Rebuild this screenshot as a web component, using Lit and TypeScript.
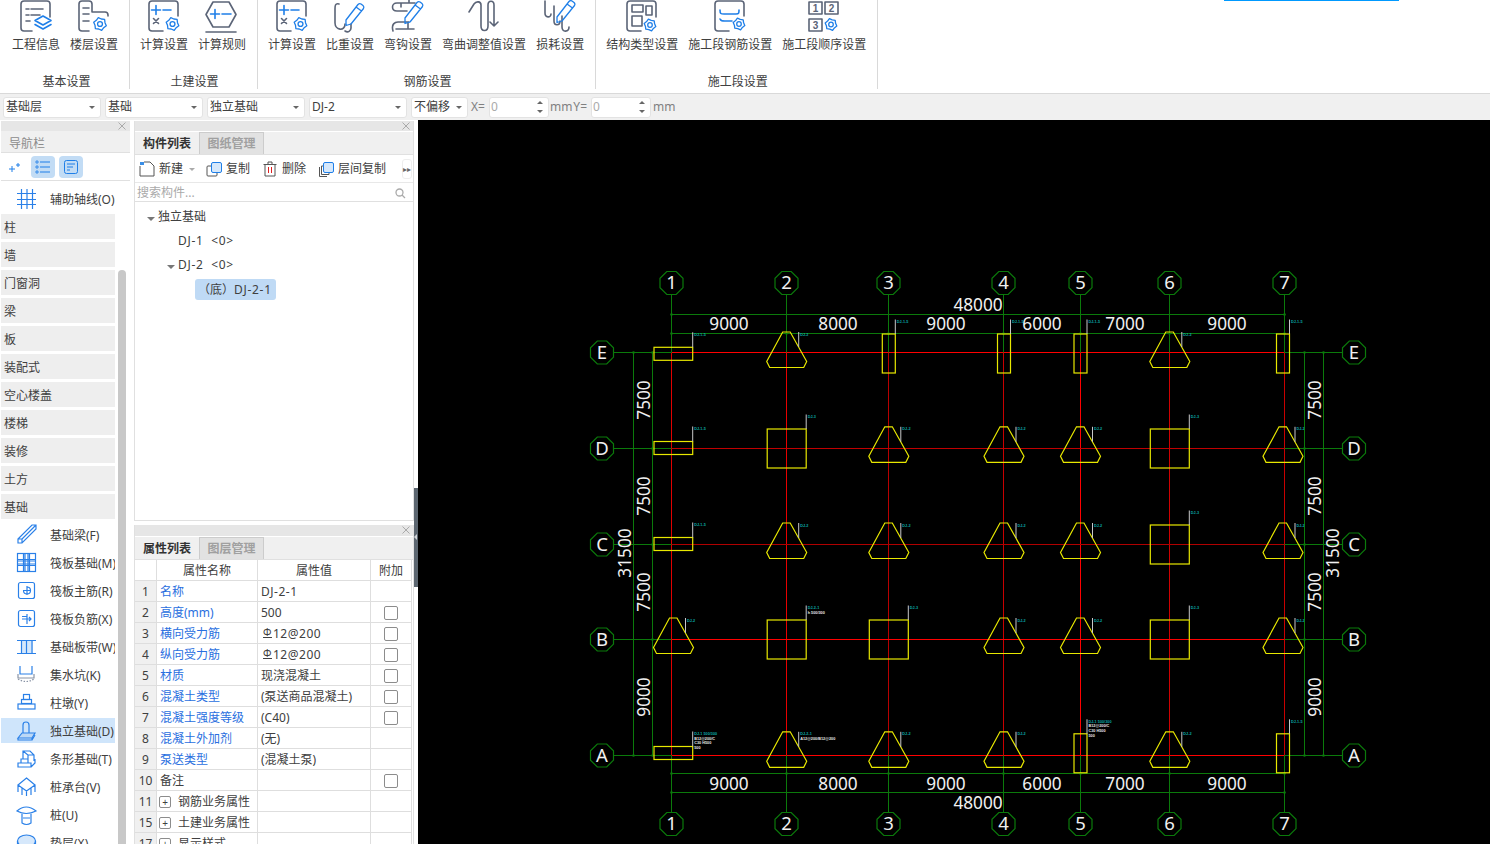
import { LitElement, html, css, svg } from "lit";
import { customElement } from "lit/decorators.js";

const gear = (cx: number, cy: number, r = 6) => {
  const pts: string[] = [];
  for (let i = 0; i < 12; i++) {
    const a = (Math.PI / 6) * i + Math.PI / 12;
    const rr = i % 2 === 0 ? r : r * 0.8;
    pts.push(`${(cx + rr * Math.cos(a)).toFixed(1)},${(cy + rr * Math.sin(a)).toFixed(1)}`);
  }
  return svg`<polygon class="b thin" points=${pts.join(" ")}></polygon><circle class="b thin" cx=${cx} cy=${cy} r=${r * 0.38}></circle>`;
};

const pen = (dx = 0, dy = 0) =>
  svg`<path class="b thin" transform="translate(${dx} ${dy})" d="M14 20 L26 4.500 q1.500 -1.500 3 -.5 l2 1.500 q1.500 1.500 .5 3 L19 24 l-5 1.500z M24 7 l5.500 4"></path>`;

const RIBBON_ICONS: Record<string, unknown> = {
  info: svg`<path class="g" d="M14 31H6a3 3 0 0 1-3-3V4a3 3 0 0 1 3-3h23a3 3 0 0 1 3 3v13"></path>
    <path class="g" d="M8 9h3M13 9h12M8 15h3M13 15h9M8 21h4"></path>
    <path class="b" d="M25 16l8 4.5-8 4.5-8-4.5zM17 24.5l8 4.5 8-4.5"></path>`,
  floor: svg`<path class="g" d="M13 31H6a3 3 0 0 1-3-3V4a3 3 0 0 1 3-3h7a3 3 0 0 1 3 3v8h13a3 3 0 0 1 3 3v1"></path>
    <path class="g" d="M7 8h6M7 14h6M7 21h6"></path>${gear(24, 24, 6.5)}`,
  calc: svg`<path class="g" d="M17 31H6a3 3 0 0 1-3-3V4a3 3 0 0 1 3-3h23a3 3 0 0 1 3 3v12"></path>
    <path class="b" d="M10 5.500v9M5.500 10h9M17 10h8"></path><path class="g" d="M7.500 18.500l5 5M12.500 18.500l-5 5"></path>${gear(26.500, 24, 6.500)}`,
  rule: svg`<path class="g" d="M9 2H25L32 14.500 25 27H9L2 14.500z"></path><path class="g" d="M2 32H32"></path>
    <path class="b" d="M11 9.500v9M6.500 14h9M18 14h9"></path>`,
  weight: svg`<path class="g" d="M7 4C3 3 3 6 3 9V23C3 30 13 32 13 24M13 31C16 33 19 31 19 28V24"></path>${pen()}`,
  hook: svg`<path class="g" d="M25 3H7C1 3 1 11 7 11H17M11 7V3M19 3V0M3 31C1 24 5 22 8 22H19M18 22V28M6 29H24"></path>${pen(1, -2)}`,
  bend: svg`<path class="g" d="M3 12L8 4C10 1 15 1 15 5V26C15 32 22 32 22 26V5C22 0 28 0 28 5V26L32 22M28 26L24 22"></path>`,
  loss: svg`<path class="g" d="M3 1V13C3 18 9 18 9 14M12 6V21C12 26 18 26 18 21M20 16V27C20 33 27 32 27 27"></path>${pen(1, -3)}`,
  type: svg`<path class="g" d="M17 31H6a3 3 0 0 1-3-3V4a3 3 0 0 1 3-3h23a3 3 0 0 1 3 3v13"></path>
    <rect class="g" x="8" y="5" width="11" height="7"></rect><rect class="g" x="22" y="6" width="6" height="9"></rect><rect class="g" x="8" y="16" width="10" height="10"></rect>${gear(26, 25, 6)}`,
  rebar: svg`<path class="g" d="M17 31H6a3 3 0 0 1-3-3V4a3 3 0 0 1 3-3h23a3 3 0 0 1 3 3v12"></path>
    <path class="b" d="M8 10C8 14 9 14 12 14H24C27 14 27 13 27 10M8 19C9 21 10 21 13 21H20"></path>${gear(27, 24, 6)}`,
  order: svg`<rect class="g" x="3" y="2" width="13" height="12"></rect><rect class="g" x="19" y="2" width="13" height="12"></rect><rect class="g" x="3" y="19" width="13" height="12"></rect>
    <text class="num" x="9.500" y="12">1</text><text class="num" x="25.500" y="12">2</text><text class="num" x="9.500" y="29">3</text>${gear(25, 24.500, 6)}`,
};

const RIBBON = [
  { title: "基本设置", items: [["工程信息", "info"], ["楼层设置", "floor"]] },
  { title: "土建设置", items: [["计算设置", "calc"], ["计算规则", "rule"]] },
  {
    title: "钢筋设置",
    items: [["计算设置", "calc"], ["比重设置", "weight"], ["弯钩设置", "hook"], ["弯曲调整值设置", "bend"], ["损耗设置", "loss"]],
  },
  { title: "施工段设置", items: [["结构类型设置", "type"], ["施工段钢筋设置", "rebar"], ["施工段顺序设置", "order"]] },
];

const NAV_ICONS: Record<string, unknown> = {
  axis: svg`<path d="M3 6.500H22M3 12.500H22M3 17.500H22M7.500 2V22M13 2V22M18.500 2V22"></path>`,
  beam: svg`<path d="M4 16L18 2H22V6L8 20H4ZM4 16H8V20M8 16L22 2"></path>`,
  raft: svg`<rect x="3.500" y="2.500" width="18" height="18"></rect><path d="M3.500 8.500H21.500M3.500 14.500H21.500M9.500 2.500V20.500M15.500 2.500V20.500M3.500 10H21.500M3.500 13H21.500M11 2.500V20.500M14 2.500V20.500"></path>`,
  main: svg`<rect x="4.500" y="3.500" width="16" height="16" rx="2"></rect><path d="M9 11.500H17M13 7V16M13 8A3.500 3.500 0 1 1 9.500 11.500"></path>`,
  neg: svg`<rect x="4.500" y="3.500" width="16" height="16" rx="2"></rect><path d="M8 9.500H13V14.500M8 12H17M13 7V17M15 10L17 12L15 14"></path>`,
  strip: svg`<rect x="7" y="5.500" width="12" height="13" fill="#d6e8fb" stroke="none"></rect><path d="M3 5.500H22M3 18.500H22M7.500 5.500V18.500M18 5.500V18.500M12.500 5.500V18.500" ></path>`,
  pit: svg`<path d="M6 3V11H18V3"></path><path d="M4 11V15H20V11" stroke="#8a94a6"></path><path d="M4 16Q12 21 20 16" stroke="#8a94a6" stroke-dasharray="1.500 1.500"></path>`,
  pier: svg`<rect x="9.500" y="3.500" width="6" height="5"></rect><rect x="7.500" y="8.500" width="10" height="4"></rect><rect x="4" y="13" width="17" height="5"></rect>`,
  iso: svg`<path fill="#bcd8f6" d="M4 19L8 14H21L18 19Z"></path><path d="M9 14V6Q9 3 12 3Q15 3 15 6V14M4 19V21H18V19M18 21L21 16"></path>`,
  bar: svg`<path d="M4 20H17V16H4ZM7 16V12H14V16M9 12V4H16L20 8V14M14 8H20M9 4L14 8V12M17 20L21 16V12"></path>`,
  cap: svg`<path d="M12.500 3L21 10L12.500 16L4 10ZM4 10V17M21 10V17M12.500 16V21M8 13V20M17 13V20"></path>`,
  pile: svg`<path d="M3 8Q12 0 22 8Q12 13 3 8ZM8 11V20Q12.500 23 17 20V11M9 15H16"></path>`,
  pad: svg`<ellipse cx="12.500" cy="10" rx="9" ry="6" fill="#d6e8fb"></ellipse><path d="M3.500 10V18M21.500 10V18"></path>`,
};

const BANDS = ["柱", "墙", "门窗洞", "梁", "板", "装配式", "空心楼盖", "楼梯", "装修", "土方", "基础"];
const FOUNDATION = [
  ["基础梁(F)", "beam"],
  ["筏板基础(M)", "raft"],
  ["筏板主筋(R)", "main"],
  ["筏板负筋(X)", "neg"],
  ["基础板带(W)", "strip"],
  ["集水坑(K)", "pit"],
  ["柱墩(Y)", "pier"],
  ["独立基础(D)", "iso"],
  ["条形基础(T)", "bar"],
  ["桩承台(V)", "cap"],
  ["桩(U)", "pile"],
  ["垫层(X)", "pad"],
];

type Prop = { n: string; name: string; value?: string; link?: boolean; check?: boolean; expand?: boolean; steel?: boolean; wide?: boolean };
const PROPS: Prop[] = [
  { n: "1", name: "名称", value: "DJ-2-1", link: true, wide: true },
  { n: "2", name: "高度(mm)", value: "500", link: true, check: true },
  { n: "3", name: "横向受力筋", value: "12@200", link: true, check: true, steel: true, wide: true },
  { n: "4", name: "纵向受力筋", value: "12@200", link: true, check: true, steel: true, wide: true },
  { n: "5", name: "材质", value: "现浇混凝土", link: true, check: true },
  { n: "6", name: "混凝土类型", value: "(泵送商品混凝土)", link: true, check: true },
  { n: "7", name: "混凝土强度等级", value: "(C40)", link: true, check: true },
  { n: "8", name: "混凝土外加剂", value: "(无)", link: true },
  { n: "9", name: "泵送类型", value: "(混凝土泵)", link: true },
  { n: "10", name: "备注", check: true },
  { n: "11", name: "钢筋业务属性", expand: true },
  { n: "15", name: "土建业务属性", expand: true },
  { n: "17", name: "显示样式", expand: true },
];

// drawing data, page coordinates
const COLS = [671.5, 786.5, 888.5, 1003.5, 1080.5, 1169.5, 1284.5];
const COL_RED = ["#e00000", "#e80000", "#b80000", "#c80000", "#ff0000", "#d00000", "#c80000"];
const FOOT_X = [673.5, 786.7, 888.8, 1004, 1080.5, 1169.8, 1283];
const ROWS = [
  { name: "E", y: 352.5, red: "#ff0000", trap: -20.5, hr: -5.2, vr: -18.5, plan: "htvvvtv" },
  { name: "D", y: 448.5, red: "#c00000", trap: -21.7, hr: -7, vr: -18.5, plan: "hstttst" },
  { name: "C", y: 544.5, red: "#b00000", trap: -21.5, hr: -7, vr: -18.5, plan: "httttst" },
  { name: "B", y: 639.5, red: "#ff0000", trap: -21.5, hr: -7, vr: -18.5, plan: "tssttst" },
  { name: "A", y: 755.5, red: "#ff0000", trap: -23.7, hr: -9, vr: -21.7, plan: "htttvtv" },
];
const SPANS = [
  ["9000", 729],
  ["8000", 838],
  ["9000", 946],
  ["6000", 1042],
  ["7000", 1125],
  ["9000", 1227],
] as const;
const VSPANS = [
  ["7500", 400],
  ["7500", 496],
  ["7500", 592],
  ["9000", 697],
] as const;
const GREEN = "#0b7a0b";

// extra lines written beside some footings
const NOTES: Record<string, string[]> = {
  B1: ["DJ-2-1", "h 500/300"],
  A0: ["DJ-1 500/300", "B12@200/C", "C30 H500", "500"],
  A1: ["DJ-2-1", "A12@200/B12@200"],
  A4: ["DJ-1 500/300", "B12@200/C", "C30 H500", "500"],
};

const mark = (x1: number, y1: number, x2: number, y2: number, tag: string, lines: string[]) => {
  const rows = lines.length ? lines : [tag];
  return svg`<line x1=${x1} y1=${y1} x2=${x2} y2=${y2} stroke="#c8c8c8"></line>
    ${rows.map(
      (t, i) =>
        svg`<text class="tag" x=${x2 + 1.5} y=${y2 + 3.5 + i * 4.6} fill=${i === 0 ? "#0aa8a8" : "#e8e8e8"}>${t}</text>`,
    )}`;
};

const footing = (kind: string, cx: number, row: (typeof ROWS)[number], key: string, tag: string) => {
  const lines = NOTES[key] ?? [];
  if (kind === "t") {
    const t = row.y + row.trap;
    const pts = [
      [cx - 4, t],
      [cx + 3.5, t],
      [cx + 20, t + 29.5],
      [cx + 17, t + 35.5],
      [cx - 17, t + 35.5],
      [cx - 20, t + 29.5],
    ];
    return svg`<polygon class="foot" points=${pts.map((p) => p.join(",")).join(" ")}></polygon>
      ${mark(cx + 12, t + 15, cx + 12, t, tag, lines)}`;
  }
  if (kind === "s") {
    return svg`<rect class="foot" x=${cx - 19.5} y=${row.y - 19.5} width="39" height="39"></rect>
      ${mark(cx + 19.5, row.y - 19.5, cx + 19.5, row.y - 34, tag, lines)}`;
  }
  if (kind === "h") {
    const t = row.y + row.hr;
    return svg`<rect class="foot" x="654" y=${t} width="38.700" height="13"></rect>
      ${mark(692.7, t, 692.7, t - 15, tag, lines)}`;
  }
  const t = row.y + row.vr;
  return svg`<rect class="foot" x=${cx - 6.5} y=${t} width="13" height="39"></rect>
    ${mark(cx + 6.5, t, cx + 6.5, t - 14.5, tag, lines)}`;
};

const bubble = (cx: number, cy: number, label: string) => {
  const pts: string[] = [];
  for (let i = 0; i < 8; i++) {
    const a = (Math.PI / 4) * i + Math.PI / 8;
    pts.push(`${(cx + 12.4 * Math.cos(a)).toFixed(1)},${(cy + 12.4 * Math.sin(a)).toFixed(1)}`);
  }
  return svg`<polygon points=${pts.join(" ")} fill="#000" stroke=${GREEN} stroke-width="1.200"></polygon>
    <text class="dim" x=${cx} y=${cy + 6.300} font-size="17">${label}</text>`;
};

const dimText = (t: string, x: number, y: number, rotate = false) => {
  const w = t.length * 9.85;
  if (rotate) {
    return svg`<text class="dim" transform="translate(${x + 6.800} ${y}) rotate(-90)" textLength=${w} lengthAdjust="spacingAndGlyphs">${t}</text>`;
  }
  return svg`<text class="dim" x=${x} y=${y + 6.800} textLength=${w} lengthAdjust="spacingAndGlyphs">${t}</text>`;
};

const dot = (x: number, y: number) => svg`<circle cx=${x} cy=${y} r="1.300" fill=${GREEN}></circle>`;

@customElement("cad-drawing")
export class CadDrawing extends LitElement {
  static styles = css`
    :host {
      display: block;
      background: #000;
      overflow: hidden;
    }
    svg {
      display: block;
    }
    .foot {
      fill: none;
      stroke: #e8e800;
      stroke-width: 1.2;
    }
    .dim {
      fill: #f0f0f0;
      font-family: "Noto Sans", "Liberation Sans", sans-serif;
      font-size: 18.5px;
      text-anchor: middle;
    }
    .tag {
      font-family: "Liberation Sans", sans-serif;
      font-size: 3.8px;
      font-weight: 700;
    }
  `;

  protected render() {
    const top = ROWS[0].y;
    const bottom = ROWS[4].y;
    const left = COLS[0];
    const right = COLS[6];
    const green = (x1: number, y1: number, x2: number, y2: number) =>
      svg`<line x1=${x1} y1=${y1} x2=${x2} y2=${y2} stroke=${GREEN}></line>`;
    return html`<svg width="1072" height="724" viewBox="418 120 1072 724">
      ${COLS.map((x, i) => svg`<line x1=${x} y1=${top} x2=${x} y2=${bottom} stroke=${COL_RED[i]}></line>`)}
      ${ROWS.map((r) => svg`<line x1=${left} y1=${r.y} x2=${right} y2=${r.y} stroke=${r.red}></line>`)}
      ${COLS.map((x) => green(x, 295, x, top))} ${COLS.map((x) => green(x, bottom, x, 812))}
      ${ROWS.map((r) => green(614, r.y, left, r.y))} ${ROWS.map((r) => green(right, r.y, 1342, r.y))}
      ${[314.5, 333.5, 773.5, 792.5].map((y) => green(left, y, right, y))}
      ${[633.5, 652.5, 1304.5, 1323.5].map((x) => green(x, top, x, bottom))}
      ${COLS.map((x) => [dot(x, 333.5), dot(x, 773.5)])} ${[left, right].map((x) => [dot(x, 314.5), dot(x, 792.5)])}
      ${ROWS.map((r) => [dot(652.5, r.y), dot(1304.5, r.y)])}
      ${[top, bottom].map((y) => [dot(633.5, y), dot(1323.5, y)])}
      ${ROWS.map((r) =>
        [...r.plan].map((kind, c) =>
          footing(kind, FOOT_X[c], r, `${r.name}${c}`, kind === "s" ? "DJ-3" : kind === "t" ? "DJ-2" : "DJ-1-5"),
        ),
      )}
      ${SPANS.map(([t, x]) => dimText(t, x, 323.5))} ${SPANS.map(([t, x]) => dimText(t, x, 783))}
      ${dimText("48000", 978, 304)} ${dimText("48000", 978, 802)}
      ${VSPANS.map(([t, y]) => dimText(t, 643, y, true))} ${VSPANS.map(([t, y]) => dimText(t, 1314, y, true))}
      ${dimText("31500", 624, 553, true)} ${dimText("31500", 1332, 553, true)}
      ${COLS.map((x, i) => [bubble(x, 283, String(i + 1)), bubble(x, 824, String(i + 1))])}
      ${ROWS.map((r) => [bubble(602, r.y, r.name), bubble(1354, r.y, r.name)])}
    </svg>`;
  }
}

@customElement("app-root")
export class AppRoot extends LitElement {
  static styles = css`
    :host {
      display: block;
      width: 1490px;
      height: 844px;
      overflow: hidden;
      position: relative;
      background: #fff;
      color: #404040;
      font: 12px/18px "Noto Sans", "Noto Sans CJK SC", sans-serif;
    }
    svg .g,
    svg .b {
      fill: none;
      stroke-width: 1.6;
      stroke-linecap: round;
      stroke-linejoin: round;
    }
    svg .g {
      stroke: #5b6477;
    }
    svg .b {
      stroke: #1f7fe8;
    }
    svg .thin {
      stroke-width: 1.3;
    }
    svg .num {
      fill: #5b6477;
      font: 700 10px "Liberation Sans", sans-serif;
      text-anchor: middle;
    }
    .progress {
      position: absolute;
      left: 1224px;
      top: 0;
      width: 175px;
      height: 1px;
      background: #0099ff;
    }
    .ribbon {
      display: flex;
      height: 93px;
      box-sizing: border-box;
    }
    .group {
      height: 89px;
      display: flex;
      flex-direction: column;
      justify-content: space-between;
      padding: 0 11px 0 10px;
      border-right: 1px solid #d9d9d9;
    }
    .group:first-child {
      padding-left: 12px;
    }
    .group-items {
      display: flex;
      gap: 10px;
    }
    .item {
      display: flex;
      flex-direction: column;
      align-items: center;
      white-space: nowrap;
    }
    .item svg {
      display: block;
      width: 36px;
      height: 35px;
      margin-bottom: 1px;
    }
    .group-title {
      text-align: center;
      line-height: 18px;
      padding-left: 3px;
      height: 16px;
    }
    .bar {
      height: 27px;
      box-sizing: border-box;
      border-top: 1px solid #d9d9d9;
      background: #f0f0f0;
      display: flex;
      align-items: center;
      padding-left: 3px;
      gap: 4px;
      color: #808080;
    }
    .select,
    .input {
      height: 21px;
      box-sizing: border-box;
      background: #fff;
      border: 1px solid #e3e3e3;
      border-radius: 3px;
      display: flex;
      align-items: center;
      padding-left: 2px;
      position: relative;
    }
    .select {
      width: 98px;
      color: #404040;
    }
    .select.short {
      width: 57px;
      margin-right: -1px;
    }
    .select::after {
      content: "";
      position: absolute;
      right: 5px;
      top: 8px;
      border: 3px solid transparent;
      border-top: 3px solid #666;
    }
    .input {
      width: 60px;
      color: #aaa;
      padding-left: 1px;
    }
    .input.after-y {
      margin-right: 1px;
    }
    .spin {
      position: absolute;
      right: 5px;
      top: 3px;
      display: flex;
      flex-direction: column;
      gap: 6px;
    }
    .spin i {
      display: block;
      border-left: 3px solid transparent;
      border-right: 3px solid transparent;
    }
    .spin i:first-child {
      border-bottom: 3px solid #666;
    }
    .spin i:last-child {
      border-top: 3px solid #666;
    }
    .bar .unit {
      margin-left: -3px;
    }
    .main {
      display: flex;
      height: 724px;
    }
    .nav {
      width: 130px;
      padding: 1px 0 0 1px;
      box-sizing: border-box;
      display: flex;
      flex-direction: column;
    }
    .close {
      height: 10px;
      background: #e6e6e6;
      position: relative;
      flex: none;
    }
    .close svg {
      position: absolute;
      right: 3px;
      top: 1px;
    }
    .nav .close svg {
      right: 4px;
    }
    .nav-title {
      height: 22px;
      flex: none;
      background: #f0f0f0;
      border-bottom: 1px solid #e0e0e0;
      color: #8c8c8c;
      padding-left: 8px;
      line-height: 25px;
      box-sizing: border-box;
    }
    .nav-tools {
      height: 28px;
      flex: none;
      box-sizing: border-box;
      border-bottom: 1px solid #e0e0e0;
      display: flex;
      align-items: center;
      gap: 4px;
      padding: 1px 0 0 2px;
    }
    .nav-tools button {
      all: unset;
      width: 24px;
      height: 22px;
      border-radius: 4px;
      display: flex;
      align-items: center;
      justify-content: center;
    }
    .nav-tools button.on {
      background: #c2dcf5;
    }
    .nav-body {
      flex: 1;
      min-height: 0;
      display: flex;
      padding-top: 5px;
      overflow: hidden;
    }
    .nav-list {
      width: 114px;
      flex: none;
      display: flex;
      flex-direction: column;
      gap: 3px;
    }
    .band,
    .tool {
      height: 25px;
      flex: none;
      display: flex;
      align-items: center;
      white-space: nowrap;
      overflow: hidden;
      box-sizing: border-box;
      padding-top: 2px;
    }
    .band {
      background: #eeeeee;
      padding-left: 3px;
    }
    .tool {
      padding-left: 13px;
      gap: 12px;
    }
    .tool.sel {
      background: #cfe5fb;
    }
    .tool svg {
      flex: none;
      margin-top: -2px;
      fill: none;
      stroke: #2a80e8;
      stroke-width: 1.200;
    }
    .scroll {
      width: 8px;
      margin: 84px 0 0 3px;
      background: #c8c8c8;
      border-radius: 4px 4px 0 0;
      height: 600px;
      flex: none;
    }
    .side {
      width: 280px;
      margin-left: 4px;
      display: flex;
      flex-direction: column;
      gap: 4px;
      padding-top: 1px;
      box-sizing: border-box;
    }
    .pane {
      border-left: 1px solid #e0e0e0;
      border-right: 1px solid #e0e0e0;
      box-sizing: border-box;
      display: flex;
      flex-direction: column;
    }
    .pane.top {
      height: 400px;
      border-bottom: 1px solid #e0e0e0;
    }
    .pane.bottom {
      flex: 1;
      min-height: 0;
      overflow: hidden;
    }
    .pane.bottom .close {
      height: 11px;
    }
    .tabs {
      display: flex;
      height: 23px;
      flex: none;
      background: #f0f0f0;
      border-bottom: 1px solid #e0e0e0;
      box-sizing: border-box;
      margin-top: 1px;
    }
    .tab {
      width: 64px;
      box-sizing: border-box;
      text-align: center;
      line-height: 24px;
      font-weight: 700;
      color: #333;
    }
    .tab.off {
      width: 65px;
      background: #e2e2e2;
      color: #a0a0a0;
      border: 1px solid #cccccc;
      border-bottom: none;
      line-height: 22px;
    }
    .comp-tools {
      height: 28px;
      flex: none;
      box-sizing: border-box;
      border-bottom: 1px solid #e8e8e8;
      display: flex;
      align-items: center;
      padding: 1px 0 0 4px;
      gap: 4px;
      white-space: nowrap;
    }
    .comp-tools svg {
      flex: none;
      margin-left: 8px;
    }
    .comp-tools svg:first-child {
      margin-left: 0;
    }
    .caret {
      border: 3px solid transparent;
      border-top: 3px solid #aaa;
      margin: 3px -1px 0 2px;
    }
    .more {
      margin-left: auto;
      margin-right: 1px;
      width: 10px;
      height: 20px;
      box-sizing: border-box;
      border: 1px solid #eee;
      border-radius: 3px;
      color: #666;
      font-size: 8px;
      line-height: 18px;
      text-align: center;
    }
    .search {
      height: 19px;
      flex: none;
      box-sizing: border-box;
      border-bottom: 1px solid #e0e0e0;
      color: #aaaaaa;
      padding: 2px 7px 0 2px;
      display: flex;
      justify-content: space-between;
      align-items: center;
    }
    .tree {
      padding-top: 3px;
      flex: 1;
    }
    .node {
      height: 24px;
      display: flex;
      align-items: center;
    }
    .code {
      letter-spacing: 0.7px;
    }
    .arrow {
      border: 4px solid transparent;
      border-top: 4px solid #777;
      margin: 4px 3px 0 0;
      border-bottom-width: 0;
    }
    .d0 {
      padding-left: 12px;
    }
    .d1 {
      padding-left: 43px;
    }
    .d1.open {
      padding-left: 32px;
    }
    .d2 {
      padding-left: 60px;
    }
    .picked {
      background: #bfdaf5;
      border-radius: 3px;
      height: 21px;
      width: 81px;
      box-sizing: border-box;
      padding-left: 3px;
      line-height: 21px;
    }
    .grid {
      display: grid;
      grid-template-columns: 22px 101px 113px 41px;
      grid-auto-rows: 21px;
    }
    .cell {
      border-right: 1px solid #dedede;
      border-bottom: 1px solid #dedede;
      box-sizing: border-box;
      white-space: nowrap;
      overflow: hidden;
      display: flex;
      align-items: center;
      padding: 1px 0 0 3px;
      line-height: 20px;
    }
    .cell.head {
      justify-content: center;
      padding-left: 0;
    }
    .cell.no {
      background: #f0f0f0;
      justify-content: center;
      padding-left: 0;
    }
    .cell.link {
      color: #2a6fe0;
    }
    .cell.mid {
      justify-content: center;
      padding-left: 0;
    }
    .cell.wide {
      letter-spacing: 0.5px;
    }
    .steel {
      display: inline-block;
      width: 11px;
      text-align: center;
      font-size: 10px;
      text-decoration: underline;
      margin: -3px 0 0 1px;
    }
    .check {
      width: 14px;
      height: 14px;
      box-sizing: border-box;
      border: 1px solid #8c8c8c;
      border-radius: 2px;
    }
    .plus {
      width: 12px;
      height: 12px;
      box-sizing: border-box;
      border: 1px solid #8c8c8c;
      border-radius: 2px;
      margin: 0 7px 0 -1px;
      display: flex;
      align-items: center;
      justify-content: center;
      font-size: 10px;
      line-height: 10px;
      font-style: normal;
    }
    .splitter {
      width: 4px;
      flex: none;
      position: relative;
    }
    .splitter i {
      position: absolute;
      left: 0;
      top: 368px;
      width: 4px;
      height: 99px;
      background: #5c6670;
    }
    .splitter i::after {
      content: "";
      position: absolute;
      left: 0;
      top: 46px;
      border: 3px solid transparent;
      border-left-width: 0;
      border-right: 3px solid #d0d4d8;
    }
    cad-drawing {
      flex: 1;
    }
  `;

  private closeIcon() {
    return html`<svg width="8" height="8" viewBox="0 0 8 8"><path d="M.5 .5L7.500 7.500M7.500 .5L.5 7.500" stroke="#aaa" fill="none"></path></svg>`;
  }

  private ribbon() {
    return html`<div class="ribbon">
      ${RIBBON.map(
        (g) => html`<div class="group">
          <div class="group-items">
            ${g.items.map(
              ([label, icon]) => html`<div class="item">
                <svg viewBox="0 0 36 35">${RIBBON_ICONS[icon]}</svg><span>${label}</span>
              </div>`,
            )}
          </div>
          <div class="group-title">${g.title}</div>
        </div>`,
      )}
    </div>`;
  }

  private toolbar() {
    return html`<div class="bar">
      ${["基础层", "基础", "独立基础", "DJ-2"].map((s) => html`<div class="select">${s}</div>`)}
      <div class="select short">不偏移</div>
      <span>X=</span>
      <div class="input">0<span class="spin"><i></i><i></i></span></div>
      <span class="unit">mm</span>
      <span class="unit">Y=</span>
      <div class="input after-y">0<span class="spin"><i></i><i></i></span></div>
      <span class="unit">mm</span>
    </div>`;
  }

  private nav() {
    return html`<div class="nav">
      <div class="close">${this.closeIcon()}</div>
      <div class="nav-title">导航栏</div>
      <div class="nav-tools">
        <button>
          <svg width="14" height="14" viewBox="0 0 14 14"><path d="M4 6v6M1 9h6M10 3v4M8 5h4" stroke="#1f7fe8" fill="none"></path></svg>
        </button>
        <button class="on">
          <svg width="16" height="14" viewBox="0 0 16 14"><path d="M5 2h10M5 7h10M5 12h10" stroke="#1f7fe8" fill="none"></path><path d="M1 1h2v2H1zM1 6h2v2H1zM1 11h2v2H1z" stroke="#1f7fe8" fill="none" stroke-width=".8"></path></svg>
        </button>
        <button class="on">
          <svg width="16" height="16" viewBox="0 0 16 16"><rect x="1.500" y="1.500" width="13" height="13" rx="2" fill="none" stroke="#1f7fe8"></rect><path d="M4 5h8M4 8h6M4 11h3" stroke="#1f7fe8" fill="none"></path></svg>
        </button>
      </div>
      <div class="nav-body">
        <div class="nav-list">
          <div class="tool"><svg width="24" height="24" viewBox="0 0 24 24">${NAV_ICONS.axis}</svg>辅助轴线(O)</div>
          ${BANDS.map((b) => html`<div class="band">${b}</div>`)}
          ${FOUNDATION.map(
            ([label, icon]) => html`<div class="tool ${icon === "iso" ? "sel" : ""}">
              <svg width="24" height="24" viewBox="0 0 24 24">${NAV_ICONS[icon]}</svg>${label}
            </div>`,
          )}
        </div>
        <div class="scroll"></div>
      </div>
    </div>`;
  }

  private compPane() {
    return html`<div class="pane top">
      <div class="close">${this.closeIcon()}</div>
      <div class="tabs"><div class="tab">构件列表</div><div class="tab off">图纸管理</div></div>
      <div class="comp-tools">
        <svg width="16" height="16" viewBox="0 0 16 16"><path d="M1 5V15H15V5L11 1H5" fill="none" stroke="#555"></path><path d="M1 1h4v3H1z" fill="#3a8ee6"></path></svg>
        <span>新建</span><i class="caret"></i>
        <svg width="16" height="16" viewBox="0 0 16 16"><rect x="5.500" y="1.500" width="10" height="10" rx="1.500" fill="#d6e8fb" stroke="#1f7fe8"></rect><path d="M5 5H2a1 1 0 0 0-1 1v8a1 1 0 0 0 1 1h8a1 1 0 0 0 1-1v-2" fill="none" stroke="#555"></path></svg>
        <span>复制</span>
        <svg width="16" height="16" viewBox="0 0 16 16"><path d="M3 4V15H13V4M1.500 3.500H14.500M6 3V1H10V3" fill="none" stroke="#555"></path><path d="M6.500 6V12M9.500 6V12" stroke="#e02020" fill="none"></path></svg>
        <span>删除</span>
        <svg width="16" height="16" viewBox="0 0 16 16"><rect x="5.500" y="1.500" width="10" height="10" rx="1.500" fill="#d6e8fb" stroke="#1f7fe8"></rect><path d="M5 5H3.500V13.500H11V12M1.500 6V15.500H9" fill="none" stroke="#555"></path></svg>
        <span>层间复制</span>
        <div class="more">▸▸</div>
      </div>
      <div class="search">
        <span>搜索构件...</span>
        <svg width="11" height="11" viewBox="0 0 11 11"><circle cx="4.500" cy="4.500" r="3.500" fill="none" stroke="#aaa" stroke-width="1.300"></circle><path d="M7 7L10 10" stroke="#aaa" stroke-width="1.300"></path></svg>
      </div>
      <div class="tree">
        <div class="node d0"><i class="arrow"></i>独立基础</div>
        <div class="node d1 code">DJ-1&nbsp;&nbsp;&lt;0&gt;</div>
        <div class="node d1 open code"><i class="arrow"></i>DJ-2&nbsp;&nbsp;&lt;0&gt;</div>
        <div class="node d2"><div class="picked">（底）<span class="code">DJ-2-1</span></div></div>
      </div>
    </div>`;
  }

  private propPane() {
    return html`<div class="pane bottom">
      <div class="close">${this.closeIcon()}</div>
      <div class="tabs"><div class="tab">属性列表</div><div class="tab off">图层管理</div></div>
      <div class="grid">
        <div class="cell head"></div>
        <div class="cell head">属性名称</div>
        <div class="cell head">属性值</div>
        <div class="cell head">附加</div>
        ${PROPS.map(
          (p) => html`<div class="cell no">${p.n}</div>
            <div class="cell ${p.link ? "link" : ""}">
              ${p.expand ? html`<i class="plus">+</i>` : ""}${p.name}
            </div>
            <div class="cell ${p.wide ? "wide" : ""}">${p.steel ? html`<span class="steel">Φ</span>` : ""}${p.value ?? ""}</div>
            <div class="cell mid">${p.check ? html`<i class="check"></i>` : ""}</div>`,
        )}
      </div>
    </div>`;
  }

  protected render() {
    return html`<div class="progress"></div>
      ${this.ribbon()} ${this.toolbar()}
      <div class="main">
        ${this.nav()}
        <div class="side">${this.compPane()} ${this.propPane()}</div>
        <div class="splitter"><i></i></div>
        <cad-drawing></cad-drawing>
      </div>`;
  }
}
